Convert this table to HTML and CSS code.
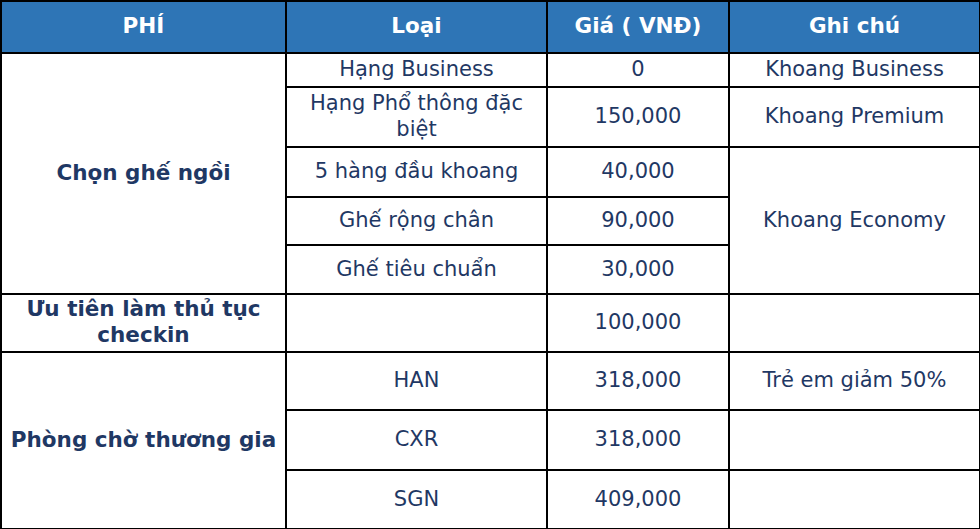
FILE: index.html
```html
<!DOCTYPE html>
<html lang="vi">
<head>
<meta charset="utf-8">
<link rel="stylesheet" href="styles.css">
</head>
<body>
<table class="fees">
  <colgroup>
    <col class="c1"><col class="c2"><col class="c3"><col class="c4">
  </colgroup>
  <thead>
    <tr class="h-head">
      <th>PHÍ</th><th>Loại</th><th>Giá ( VNĐ)</th><th>Ghi chú</th>
    </tr>
  </thead>
  <tbody>
    <tr class="r1">
      <td rowspan="5" class="name">Chọn ghế ngồi</td>
      <td>Hạng Business</td><td>0</td><td>Khoang Business</td>
    </tr>
    <tr class="r2">
      <td>Hạng Phổ thông đặc biệt</td><td>150,000</td><td>Khoang Premium</td>
    </tr>
    <tr class="r3">
      <td>5 hàng đầu khoang</td><td>40,000</td><td rowspan="3">Khoang Economy</td>
    </tr>
    <tr class="r4">
      <td>Ghế rộng chân</td><td>90,000</td>
    </tr>
    <tr class="r5">
      <td>Ghế tiêu chuẩn</td><td>30,000</td>
    </tr>
    <tr class="r6">
      <td class="name">Ưu tiên làm thủ tục checkin</td><td></td><td>100,000</td><td></td>
    </tr>
    <tr class="r7">
      <td rowspan="3" class="name">Phòng chờ thương gia</td>
      <td>HAN</td><td>318,000</td><td>Trẻ em giảm 50%</td>
    </tr>
    <tr class="r8">
      <td>CXR</td><td>318,000</td><td></td>
    </tr>
    <tr class="r9">
      <td>SGN</td><td>409,000</td><td></td>
    </tr>
  </tbody>
</table>
</body>
</html>
```
FILE: styles.css
```css
html, body {
  margin: 0;
  padding: 0;
  background: #ffffff;
}

.fees {
  border-collapse: collapse;
  table-layout: fixed;
  width: 979px;
  font-family: "DejaVu Sans", sans-serif;
  font-size: 21px;
  line-height: 26px;
  color: #1f3864;
}

.c1 { width: 285px; }
.c2 { width: 261px; }
.c3 { width: 182px; }
.c4 { width: 251px; }

.fees th,
.fees td {
  border: 2px solid #000000;
  text-align: center;
  vertical-align: middle;
  padding: 0 8px 2px;
}

.fees th {
  background: #2e75b6;
  color: #ffffff;
  font-weight: bold;
  font-size: 21.5px;
}

.fees td.name {
  font-weight: bold;
  font-size: 21.5px;
}

.h-head { height: 52px; }
.r1 { height: 34px; }
.r2 { height: 60px; }
.r3 { height: 50px; }
.r4 { height: 48px; }
.r5 { height: 49px; }
.r6 { height: 58px; }
.r7 { height: 58px; }
.r8 { height: 60px; }
.r9 { height: 59px; }
```
